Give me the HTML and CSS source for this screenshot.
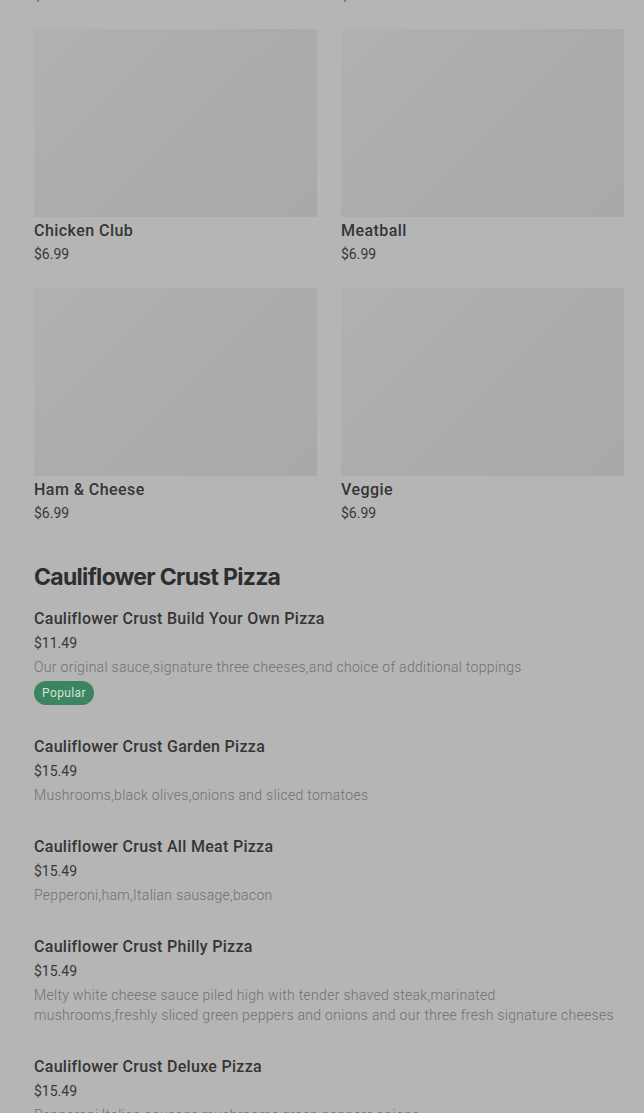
FILE: index.html
```html
<!DOCTYPE html>
<html>
<head>
<meta charset="utf-8">
<link rel="stylesheet" href="styles.css">
</head>
<body>
<main class="page">
  <section class="grid grid-top">
    <div class="card"><div class="thumb"></div><div class="card-name">Italian</div><div class="card-price">$6.99</div></div>
    <div class="card"><div class="thumb"></div><div class="card-name">Turkey</div><div class="card-price">$6.99</div></div>
    <div class="card"><div class="thumb"></div><div class="card-name">Chicken Club</div><div class="card-price">$6.99</div></div>
    <div class="card"><div class="thumb"></div><div class="card-name">Meatball</div><div class="card-price">$6.99</div></div>
    <div class="card"><div class="thumb"></div><div class="card-name">Ham &amp; Cheese</div><div class="card-price">$6.99</div></div>
    <div class="card"><div class="thumb"></div><div class="card-name">Veggie</div><div class="card-price">$6.99</div></div>
  </section>

  <section class="category">
    <h2 class="cat-title">Cauliflower Crust Pizza</h2>
    <ul class="items">
      <li class="item">
        <div class="item-name">Cauliflower Crust Build Your Own Pizza</div>
        <div class="item-price">$11.49</div>
        <div class="item-desc">Our original sauce,signature three cheeses,and choice of additional toppings</div>
        <span class="badge">Popular</span>
      </li>
      <li class="item">
        <div class="item-name">Cauliflower Crust Garden Pizza</div>
        <div class="item-price">$15.49</div>
        <div class="item-desc">Mushrooms,black olives,onions and sliced tomatoes</div>
      </li>
      <li class="item">
        <div class="item-name">Cauliflower Crust All Meat Pizza</div>
        <div class="item-price">$15.49</div>
        <div class="item-desc">Pepperoni,ham,Italian sausage,bacon</div>
      </li>
      <li class="item">
        <div class="item-name">Cauliflower Crust Philly Pizza</div>
        <div class="item-price">$15.49</div>
        <div class="item-desc">Melty white cheese sauce piled high with tender shaved steak,marinated mushrooms,freshly sliced green peppers and onions and our three fresh signature cheeses</div>
      </li>
      <li class="item">
        <div class="item-name">Cauliflower Crust Deluxe Pizza</div>
        <div class="item-price">$15.49</div>
        <div class="item-desc">Pepperoni,Italian sausage,mushrooms,green peppers,onions</div>
      </li>
    </ul>
  </section>
</main>
</body>
</html>
```

FILE: styles.css
```css
* { box-sizing: border-box; }
html, body {
  margin: 0;
  padding: 0;
  background: #b5b5b5;
}
body {
  font-family: Roboto, "Liberation Sans", Arial, sans-serif;
  color: #2f2f2f;
  overflow: hidden;
}
.page {
  padding: 0 20px 0 34px;
}
.grid {
  display: grid;
  grid-template-columns: 283px 283px;
  column-gap: 24px;
  row-gap: 23px;
}
.grid-top {
  margin-top: -230px;
}
.card {
  display: flex;
  flex-direction: column;
}
.thumb {
  height: 188px;
  background: linear-gradient(135deg, #b1b1b1 0%, #acacac 45%, #a9a9a9 100%);
}
.card-name {
  margin-top: 3px;
  font-size: 16px;
  font-weight: 500;
  letter-spacing: 0.45px;
  line-height: 22px;
  color: #353535;
}
.card-price {
  margin-top: 1px;
  font-size: 14px;
  line-height: 22px;
  color: #383838;
}
.category {
  margin-top: 37px;
}
.cat-title {
  margin: 0;
  font-family: Inter, "Liberation Sans", sans-serif;
  font-size: 23px;
  font-weight: 700;
  letter-spacing: -0.7px;
  line-height: 32px;
  color: #2e2e2e;
}
.items {
  list-style: none;
  margin: 14px 0 0;
  padding: 0;
}
.item {
  padding-bottom: 30px;
}
.item-name {
  font-size: 16px;
  font-weight: 500;
  letter-spacing: 0.3px;
  line-height: 24px;
  color: #353535;
}
.item-price {
  font-size: 14px;
  line-height: 24px;
  color: #383838;
}
.item-desc {
  font-size: 14px;
  font-weight: 300;
  letter-spacing: 0.3px;
  line-height: 20px;
  margin-top: 2px;
  color: #707070;
  max-width: 582px;
}
.badge {
  display: inline-block;
  margin-top: 4px;
  padding: 0 8px;
  height: 24px;
  line-height: 24px;
  font-size: 12px;
  letter-spacing: 0.4px;
  border-radius: 12px;
  background: #3b8560;
  color: #d3e4d9;
}
```
